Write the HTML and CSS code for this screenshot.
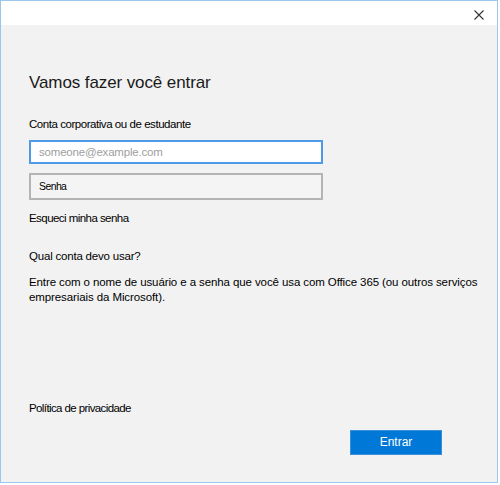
FILE: index.html
```html
<!DOCTYPE html>
<html lang="pt">
<head>
<meta charset="utf-8">
<link rel="stylesheet" href="styles.css">
</head>
<body>
<div class="window">
  <div class="titlebar">
    <svg class="close" width="10" height="10" viewBox="0 0 10 10"><path d="M0.5 0.5L9.5 9.5M9.5 0.5L0.5 9.5" stroke="#333" stroke-width="1.1" fill="none"/></svg>
  </div>
  <div class="content">
    <h1 class="title">Vamos fazer você entrar</h1>
    <div class="label">Conta corporativa ou de estudante</div>
    <div class="input email">someone@example.com</div>
    <div class="input password">Senha</div>
    <div class="link forgot">Esqueci minha senha</div>
    <div class="question">Qual conta devo usar?</div>
    <p class="desc">Entre com o nome de usuário e a senha que você usa com Office 365 (ou outros serviços empresariais da Microsoft).</p>
    <div class="spacer"></div>
    <div class="link privacy">Política de privacidade</div>
    <div class="actions"><div class="btn">Entrar</div></div>
  </div>
</div>
</body>
</html>
```
FILE: styles.css
```css
html, body { margin: 0; padding: 0; background: #ffffff; }
body { font-family: "Liberation Sans", Arial, sans-serif; color: #000; }
.window {
  width: 496px; height: 481px;
  border: 1px solid #9cc7ec;
  background: #f2f2f2;
  display: flex; flex-direction: column;
}
.titlebar {
  height: 24px; background: #fff;
  display: flex; justify-content: flex-end; align-items: center;
  padding-right: 13px;
}
.close { display: block; margin-top: 3px; }
.content {
  flex: 1; display: flex; flex-direction: column;
  padding: 0 0 27px 28px;
}
.title {
  margin: 46px 0 0 0; font-weight: 400; font-size: 17px; line-height: 24px;
  color: #1a1a1a; letter-spacing: -0.1px;
}
.label { margin: 21px 0 0 0; font-size: 11.5px; line-height: 16px; letter-spacing: -0.45px; }
.input {
  width: 282px; box-sizing: content-box; padding-left: 8px;
}
.email {
  margin-top: 8px; border: 2px solid #4d9be6; background: #fff; color: #a0a0a0;
  font-size: 11.5px; letter-spacing: -0.2px; height: 20px; line-height: 20px;
}
.password {
  margin-top: 9px; border: 2px solid #b4b4b4; background: #f4f4f4;
  font-size: 10.5px; letter-spacing: -0.6px; height: 23px; line-height: 23px;
}
.link, .question { font-size: 11.5px; line-height: 16px; }
.forgot { margin-top: 10px; letter-spacing: -0.55px; }
.question { margin-top: 22px; letter-spacing: -0.2px; }
.privacy { letter-spacing: -0.6px; }
.desc {
  margin: 11px 0 0 0; font-size: 11.5px; line-height: 15px; width: 455px;
  letter-spacing: -0.1px;
}
.spacer { flex: 1; }
.actions { display: flex; justify-content: flex-end; padding-right: 55px; margin-top: 14px; }
.btn {
  width: 90px; height: 23px; background: #0078d7; border: 1px solid #3c8fd9;
  color: #fff; font-size: 12px; line-height: 23px; text-align: center;
}
```
